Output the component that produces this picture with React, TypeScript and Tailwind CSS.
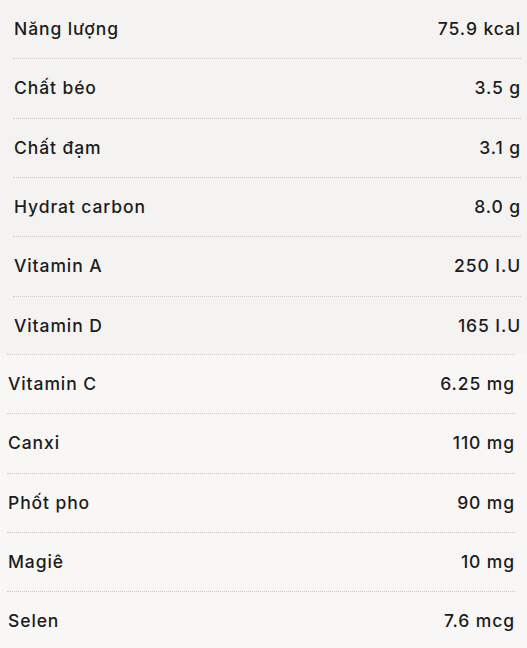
const top = [
  { name: 'Năng lượng', value: '75.9 kcal' },
  { name: 'Chất béo', value: '3.5 g' },
  { name: 'Chất đạm', value: '3.1 g' },
  { name: 'Hydrat carbon', value: '8.0 g' },
  { name: 'Vitamin A', value: '250 I.U' },
  { name: 'Vitamin D', value: '165 I.U' },
]

const bottom = [
  { name: 'Vitamin C', value: '6.25 mg' },
  { name: 'Canxi', value: '110 mg' },
  { name: 'Phốt pho', value: '90 mg' },
  { name: 'Magiê', value: '10 mg' },
  { name: 'Selen', value: '7.6 mcg' },
]

function Row({ name, value, last }: { name: string; value: string; last?: boolean }) {
  return (
    <div
      className={`flex items-center justify-between pl-px ${
        last ? 'h-[58px]' : 'h-[59.33px] border-b border-dotted border-[#c9c9c9]'
      }`}
    >
      <span>{name}</span>
      <span>{value}</span>
    </div>
  )
}

export default function App() {
  return (
    <div className="h-[648px] w-[527px] overflow-hidden bg-[#f8f7f5] font-['Inter','Liberation_Sans',sans-serif] text-[17.5px] font-medium tracking-[0.9px] text-[#1c1c1c]">
      <div className="h-[354px] bg-[#f4f3f1] pl-[13px] pr-[6px]">
        {top.map((r, i) => (
          <Row key={r.name} {...r} last={i === top.length - 1} />
        ))}
      </div>
      <div className="ml-[7px] mr-[12px] border-t border-dotted border-[#c9c9c9]">
        {bottom.map((r) => (
          <Row key={r.name} {...r} />
        ))}
      </div>
    </div>
  )
}
